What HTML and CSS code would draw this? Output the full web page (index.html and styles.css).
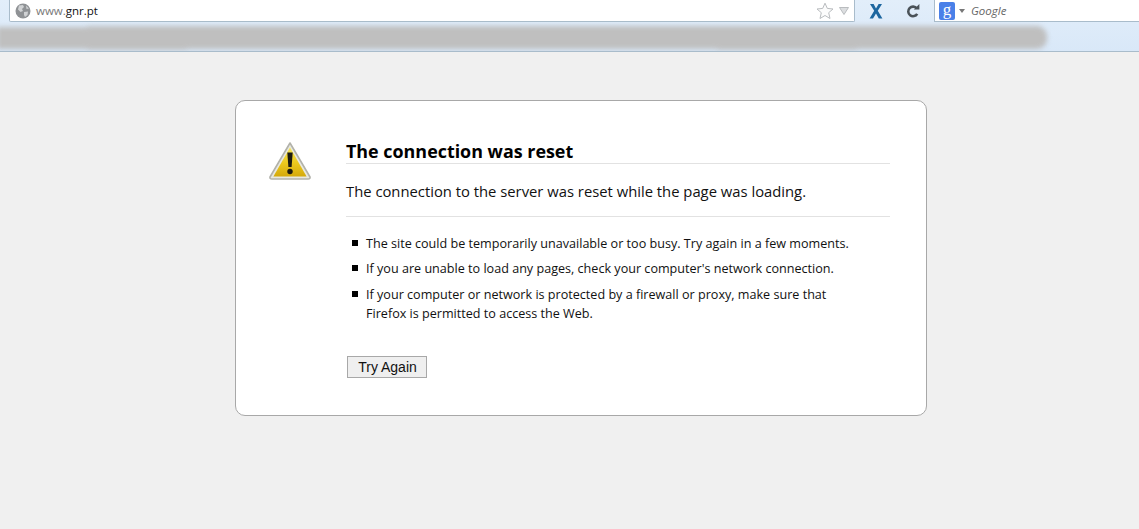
FILE: index.html

```html
<!DOCTYPE html>
<html lang="en">
<head>
  <meta charset="UTF-8" />
  <title>Problem loading page</title>
  <link rel="stylesheet" href="styles.css">
</head>
<body>
  <div class="chrome">
    <div class="navrow">
      <div class="urlbar">
        <svg class="globe" width="16" height="16" viewBox="0 0 16 16">
          <circle cx="8" cy="8" r="7.5" fill="#8f9295"/>
          <path d="M4 2.5 L8 2 L9 4 L7 6 L8 8 L5.5 9 L3 6.5 Z M9 9 L13 8.5 L12.5 12 L10 14 L9 12 Z M11 2.5 L14 5.5 L11.5 6 Z" fill="#d0d2d4"/>
        </svg>
        <span class="url"><span class="url-dim">www.</span>gnr.pt</span>
        <svg class="star" width="18" height="18" viewBox="0 0 18 18">
          <path d="M9 1.2 L11.3 6.4 L17 7 L12.7 10.7 L14 16.5 L9 13.5 L4 16.5 L5.3 10.7 L1 7 L6.7 6.4 Z" fill="#fcfcfc" stroke="#b9bcbf" stroke-width="1"/>
        </svg>
        <svg class="drop" width="10" height="8" viewBox="0 0 10 8">
          <path d="M0.5 0.5 H9.5 L5 7.5 Z" fill="#dcdee0" stroke="#b9bcbf"/>
        </svg>
      </div>
      <svg class="x-btn" width="14" height="16" viewBox="0 0 14 16">
        <path d="M1 1 H4.6 L7 5.6 L9.6 1 H13 L8.8 7.8 L13.4 15.4 H9.8 L7 10.4 L4 15.4 H0.6 L5.2 7.8 Z" fill="#1c669f"/>
      </svg>
      <svg class="reload" width="16" height="16" viewBox="0 0 16 16">
        <path d="M11.8 5.4 A4.8 4.8 0 1 0 12.2 10.8" fill="none" stroke="#4a5258" stroke-width="2.6"/>
        <path d="M8.8 6.6 L14.4 6.6 L14.4 1 Z" fill="#4a5258"/>
      </svg>
      <div class="searchbar">
        <span class="g-badge">g</span>
        <span class="g-arrow"></span>
        <span class="g-label">Google</span>
      </div>
    </div>
    <div class="smudge">
      <span class="blot blot-a"></span>
      <span class="blot blot-b"></span>
      <span class="blot blot-c"></span>
      <span class="blot blot-d"></span>
      <span class="blot blot-c"></span>
      <span class="blot blot-e"></span>
      <span class="blot blot-d"></span>
    </div>
  </div>

  <div class="card">
    <svg class="warn" width="44" height="40" viewBox="0 0 44 40">
      <defs>
        <linearGradient id="warnfill" x1="0" y1="0" x2="0" y2="1">
          <stop offset="0" stop-color="#f6e65a"/>
          <stop offset="0.55" stop-color="#ecc81c"/>
          <stop offset="1" stop-color="#d4a90c"/>
        </linearGradient>
      </defs>
      <path d="M22 2 L42 36 Q42.5 38 40 38 H4 Q1.5 38 2 36 Z" fill="#e8e8e0" stroke="#b2b2aa" stroke-width="1.6" stroke-linejoin="round"/>
      <path d="M22 6.5 L38.6 35.6 H5.4 Z" fill="url(#warnfill)"/>
      <path d="M19.3 11.5 H24.7 L23.6 26 H20.4 Z" fill="#1c1a10"/>
      <circle cx="22" cy="30.5" r="2.7" fill="#1c1a10"/>
    </svg>
    <div class="card-body">
      <h1 class="title">The connection was reset</h1>
      <p class="lead">The connection to the server was reset while the page was loading.</p>
      <ul class="tips">
        <li>The site could be temporarily unavailable or too busy. Try again in a few moments.</li>
        <li>If you are unable to load any pages, check your computer's network connection.</li>
        <li>If your computer or network is protected by a firewall or proxy, make sure that Firefox is permitted to access the Web.</li>
      </ul>
      <button class="retry">Try Again</button>
    </div>
  </div>
</body>
</html>
```

FILE: styles.css

```css
html, body { margin: 0; height: 100%; overflow: hidden; }
body { background: #f0f0f0; font-family: "Open Sans", sans-serif; color: #000; }

.chrome { height: 51px; background: linear-gradient(#e2eefa, #d9e8f8); border-bottom: 1px solid #a9bccb; overflow: hidden; }
.navrow { display: flex; align-items: center; height: 22px; }

.urlbar { display: flex; align-items: center; width: 846px; height: 22px; margin-left: 9px; background: #fff; border: 1px solid #a9bccb; border-top: 0; box-sizing: border-box; border-radius: 0 0 2px 2px; }
.globe { margin-left: 5px; }
.url { margin-left: 5px; font: 11.5px "Open Sans", sans-serif; color: #111; flex: 1; }
.url-dim { color: #777; }
.star { margin-right: 5px; }
.drop { margin-right: 5px; }

.x-btn { flex: none; margin-left: 14px; }
.reload { flex: none; margin-left: 22px; }

.searchbar { display: flex; align-items: center; flex: 1; height: 22px; margin-left: 13px; background: #fff; border: 1px solid #a9bccb; border-top: 0; border-right: 0; box-sizing: border-box; }
.g-badge { width: 16px; height: 18px; margin-left: 4px; background: #4a80e8; color: #fff; font: 17px/15px "Liberation Serif", serif; text-align: center; border-radius: 2px; }
.g-arrow { width: 0; height: 0; margin: 3px 0 0 4px; border: 3px solid transparent; border-top: 4px solid #777; }
.g-label { margin-left: 6px; font: italic 11.5px "Open Sans", sans-serif; color: #666; }

/* blurred-out bookmarks row */
.smudge { display: flex; align-items: center; width: 1050px; height: 31px; filter: blur(2.5px); margin-left: -3px; }
.blot { display: block; background: #bfbfbf; }
.blot-a { width: 90px; height: 22px; }
.blot-b { width: 100px; height: 24px; }
.blot-c { width: 170px; height: 23px; }
.blot-d { width: 190px; height: 23px; }
.blot-e { width: 140px; height: 24px; }
.blot:last-child { border-radius: 0 10px 10px 0; }

.card { display: flex; width: 692px; height: 316px; margin: 48px 0 0 235px; box-sizing: border-box; background: #fff; border: 1px solid #a8a8a8; border-radius: 10px; }
.warn { flex: none; margin: 40px 0 0 32px; }
.card-body { width: 544px; margin-left: 34px; padding-top: 38px; }

.title { margin: 0; font-size: 17.9px; line-height: 24px; font-weight: 700; border-bottom: 1px solid #e2e2e2; }
.lead { margin: 0; padding: 16px 0 14px; font-size: 14.8px; line-height: 22px; color: #111; border-bottom: 1px solid #e2e2e2; }

.tips { list-style: none; margin: 17px 0 0; padding: 0 0 0 20px; width: 490px; font-size: 12.6px; line-height: 19px; color: #111; }
.tips li { position: relative; margin-bottom: 6px; }
.tips li:nth-child(2) { margin-bottom: 7px; }
.tips li::before { content: ""; position: absolute; left: -14px; top: 6px; width: 6px; height: 6px; background: #000; }

.retry { display: block; width: 80px; height: 22px; margin: 33px 0 0 1px; padding: 0 0 0 1px; font: 14px "Liberation Sans", sans-serif; color: #111; background: #efefef; border: 1px solid #a8a8a8; }
```
